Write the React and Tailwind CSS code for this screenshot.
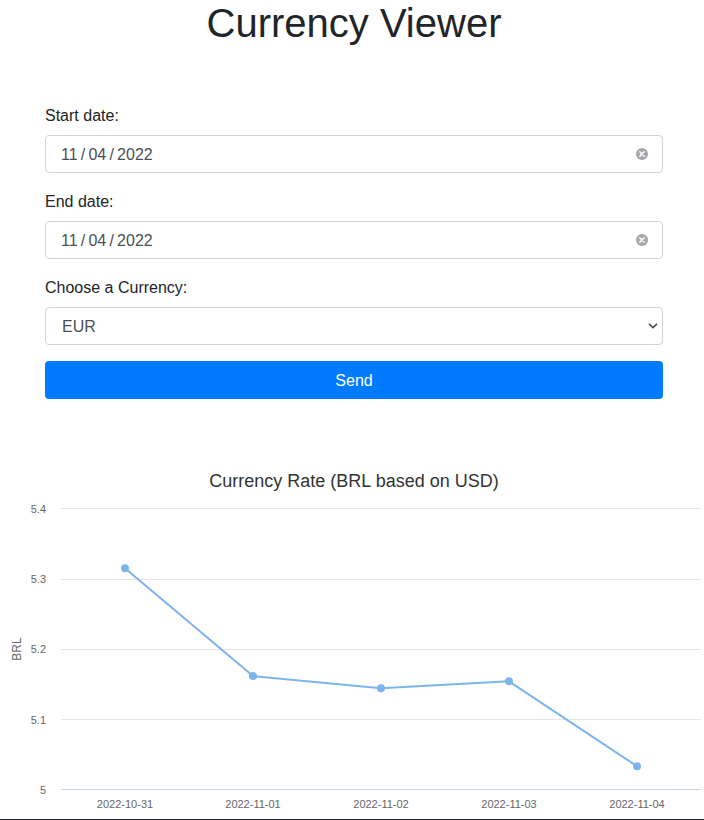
import { useState } from "react";

const rates = [
  { date: "2022-10-31", value: 5.3156 },
  { date: "2022-11-01", value: 5.1622 },
  { date: "2022-11-02", value: 5.1448 },
  { date: "2022-11-03", value: 5.1547 },
  { date: "2022-11-04", value: 5.0338 },
];

const ticks = [5.4, 5.3, 5.2, 5.1, 5];

const PLOT_LEFT = 61;
const PLOT_RIGHT = 701;
const PLOT_TOP = 59;
const PLOT_BOTTOM = 340;
const STEP = (PLOT_RIGHT - PLOT_LEFT) / rates.length;

const xOf = (index) => PLOT_LEFT + STEP * (index + 0.5);
const yOf = (value) =>
  PLOT_BOTTOM - ((value - 5) / 0.4) * (PLOT_BOTTOM - PLOT_TOP);

function DateField({ id, label }) {
  const [value, setValue] = useState("11\u2009/\u200904\u2009/\u20092022");
  return (
    <div className="mb-4">
      <label htmlFor={id} className="mb-[7px] block pt-px leading-6">
        {label}
      </label>
      <div className="relative">
        <input
          id={id}
          type="text"
          value={value}
          onChange={(e) => setValue(e.target.value)}
          className="block h-[38px] w-full rounded border border-[#ced4da] bg-white pt-[2px] pr-10 pl-[15px] text-[#495057]"
        />
        <button
          type="button"
          aria-label={`Clear ${label}`}
          onClick={() => setValue("")}
          className="absolute top-[13px] right-[15px] size-3"
        >
          <svg viewBox="0 0 12 12" className="block size-3">
            <circle cx="6" cy="6" r="6" fill="#a4a7ab" />
            <path
              d="M3.8 3.8 8.2 8.2M8.2 3.8 3.8 8.2"
              stroke="#fff"
              strokeWidth="1.5"
              strokeLinecap="round"
            />
          </svg>
        </button>
      </div>
    </div>
  );
}

function RateChart() {
  const line = rates.map((r, i) => `${xOf(i)},${yOf(r.value)}`).join(" ");
  return (
    <svg
      viewBox="0 0 704 369"
      role="img"
      aria-label="Currency Rate (BRL based on USD)"
      className="block w-full"
    >
      <text x="354" y="37" textAnchor="middle" fontSize="18" fill="#333333">
        Currency Rate (BRL based on USD)
      </text>
      {ticks.map((tick) => {
        const y = Math.ceil(yOf(tick)) - 0.5;
        return (
          <g key={tick}>
            <line
              x1={PLOT_LEFT}
              x2={PLOT_RIGHT}
              y1={y}
              y2={y}
              stroke={tick === 5 ? "#ccd6eb" : "#e6e6e6"}
            />
            <text
              x="46"
              y={Math.floor(yOf(tick) + 4.5)}
              textAnchor="end"
              fontSize="11"
              fill="#666666"
            >
              {tick}
            </text>
          </g>
        );
      })}
      <text
        transform="translate(21 199) rotate(-90)"
        textAnchor="middle"
        fontSize="12"
        fill="#666666"
      >
        BRL
      </text>
      <polyline
        points={line}
        fill="none"
        stroke="#7cb5ec"
        strokeWidth="2"
        strokeLinejoin="round"
      />
      {rates.map((r, i) => (
        <g key={r.date}>
          <circle cx={xOf(i)} cy={yOf(r.value)} r="4" fill="#7cb5ec" />
          <text
            x={xOf(i)}
            y="358"
            textAnchor="middle"
            fontSize="11"
            fill="#666666"
          >
            {r.date}
          </text>
        </g>
      ))}
    </svg>
  );
}

export default function App() {
  return (
    <div className="bg-white font-['Liberation_Sans',Arial,sans-serif] text-base text-[#212529]">
      <h1 className="pl-1 text-center text-[40px] leading-[46px]">
        Currency Viewer
      </h1>
      <form
        className="mt-[57px] pr-[41px] pl-[45px]"
        onSubmit={(e) => e.preventDefault()}
      >
        <DateField id="start-date" label="Start date:" />
        <DateField id="end-date" label="End date:" />
        <div className="mb-4">
          <label htmlFor="currency" className="mb-[7px] block pt-px leading-6">
            Choose a Currency:
          </label>
          <div className="relative">
            <select
              id="currency"
              defaultValue="EUR"
              className="block h-[38px] w-full appearance-none rounded border border-[#ced4da] bg-white px-4 pt-[2px] text-[#495057]"
            >
              <option>EUR</option>
              <option>USD</option>
              <option>JPY</option>
            </select>
            <svg
              viewBox="0 0 10 6"
              className="pointer-events-none absolute top-4 right-[5px] h-[6px] w-[10px]"
            >
              <path
                d="M1 0.8 5 4.6 9 0.8"
                fill="none"
                stroke="#495057"
                strokeWidth="1.6"
              />
            </svg>
          </div>
        </div>
        <button
          type="submit"
          className="block h-[38px] w-full rounded bg-[#007bff] pt-[2px] text-white"
        >
          Send
        </button>
      </form>
      <div className="mt-[51px] border-b border-[#212529]">
        <RateChart />
      </div>
    </div>
  );
}
